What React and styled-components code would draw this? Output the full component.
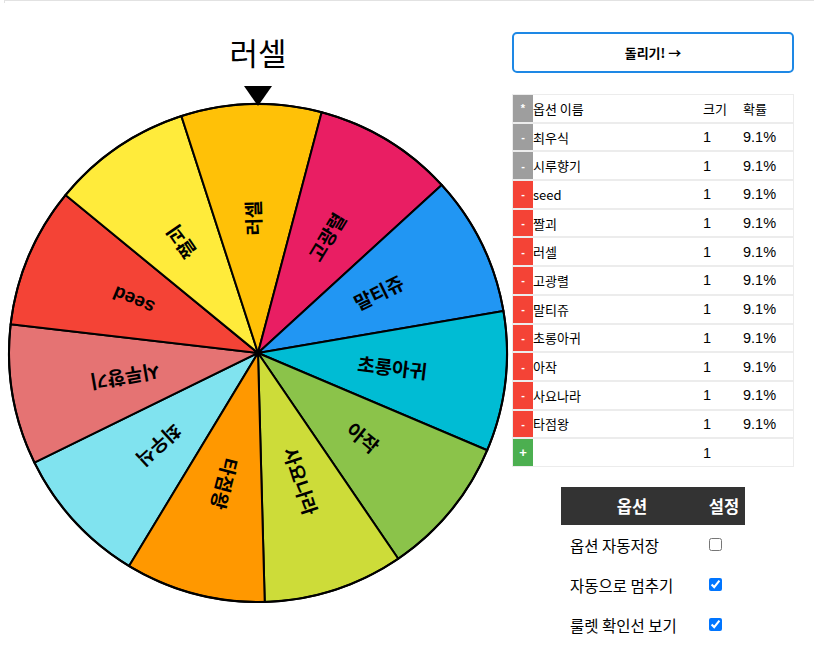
import React from "react";
import styled, { createGlobalStyle } from "styled-components";

const Global = createGlobalStyle`
  html, body { margin: 0; padding: 0; background: #fff; }
  body { font-family: "Liberation Sans", "Noto Sans CJK KR", sans-serif; color: #000; }
`;

const TopBar = styled.div`
  margin-left: 4px;
  height: 2px;
  border-top: 1px solid #e2e2e2;
  border-left: 1px solid #e2e2e2;
`;

const Main = styled.div`
  display: flex;
  align-items: flex-start;
`;

const LeftCol = styled.div`
  margin-left: 6px;
  width: 504px;
  display: flex;
  flex-direction: column;
  align-items: center;
`;

const Title = styled.div`
  margin-top: 26px;
  font-family: "Noto Sans CJK KR", sans-serif;
  font-size: 31px;
  line-height: 46px;
  font-weight: 400;
`;

const Pointer = styled.div`
  position: relative;
  z-index: 1;
  width: 0;
  height: 0;
  margin: 11px 0 -5px;
  border-left: 14px solid transparent;
  border-right: 14px solid transparent;
  border-top: 20px solid #000;
`;

const WheelSvg = styled.svg`
  display: block;
  width: 504px;
  height: 504px;
`;

const RightCol = styled.div`
  margin-left: 2px;
  width: 282px;
  padding-top: 29px;
  display: flex;
  flex-direction: column;
  align-items: center;
`;

const SpinButton = styled.button`
  width: 282px;
  height: 41px;
  border: 2px solid #1e88e5;
  border-radius: 5px;
  background: #fff;
  font-family: "Noto Sans CJK KR", sans-serif;
  font-weight: 700;
  font-size: 13px;
  color: #000;
  padding: 0;
`;

const Table = styled.div`
  margin-top: 21px;
  width: 282px;
  box-sizing: border-box;
  border: 1px solid #ececec;
  background: #ececec;
  display: flex;
  flex-direction: column;
  gap: 2px;
`;

const Row = styled.div`
  display: grid;
  grid-template-columns: 20px 1fr 40px 50px;
  height: 26.7px;
  align-items: center;
  background: #fff;
  font-family: "Noto Sans CJK KR", sans-serif;
  font-size: 13px;
`;

const RowBtn = styled.div`
  align-self: stretch;
  display: flex;
  align-items: center;
  justify-content: center;
  background: ${(p) => p.$bg};
  color: #fff;
  font-family: "Liberation Sans", sans-serif;
  font-weight: 700;
  font-size: ${(p) => (p.$big ? "13px" : "11px")};
`;

const NameCell = styled.div`
  white-space: nowrap;
`;

const NumCell = styled.div`
  font-family: ${(p) => (p.$kr ? '"Noto Sans CJK KR", sans-serif' : '"Liberation Sans", sans-serif')};
  font-size: ${(p) => (p.$kr ? "13px" : "14.5px")};
`;

const OptTable = styled.div`
  margin-top: 20px;
  width: 184px;
  display: flex;
  flex-direction: column;
`;

const OptHead = styled.div`
  display: grid;
  grid-template-columns: 142px 42px;
  height: 38px;
  align-items: center;
  background: #333;
  color: #fff;
  font-family: "Noto Sans CJK KR", sans-serif;
  font-weight: 700;
  font-size: 16.5px;
  text-align: center;
`;

const OptRow = styled.div`
  display: grid;
  grid-template-columns: 142px 42px;
  height: 40px;
  align-items: center;
  font-family: "Noto Sans CJK KR", sans-serif;
  font-size: 15.5px;
`;

const OptLabel = styled.div`
  padding-left: 9px;
  white-space: nowrap;
`;

const OptCheck = styled.div`
  display: flex;
  justify-content: flex-start;
  padding-left: 6px;
  input {
    margin: 0;
    width: 13px;
    height: 13px;
  }
`;

const items = [
  { name: "최우식", color: "#80E3EF", btn: "#9e9e9e" },
  { name: "시루향기", color: "#E57373", btn: "#9e9e9e" },
  { name: "seed", color: "#F44336", btn: "#f44336" },
  { name: "짤괴", color: "#FFEB3B", btn: "#f44336" },
  { name: "러셀", color: "#FFC107", btn: "#f44336" },
  { name: "고광렬", color: "#E91E63", btn: "#f44336" },
  { name: "말티쥬", color: "#2196F3", btn: "#f44336" },
  { name: "초롱아귀", color: "#00BCD4", btn: "#f44336" },
  { name: "아작", color: "#8BC34A", btn: "#f44336" },
  { name: "사요나라", color: "#CDDC39", btn: "#f44336" },
  { name: "타점왕", color: "#FF9800", btn: "#f44336" },
];

const C = 252;
const R = 249;
const STEP = 360 / items.length;
const OFFSET = -1.55;

function pt(angDeg, r) {
  const a = (angDeg * Math.PI) / 180;
  return [C + r * Math.cos(a), C + r * Math.sin(a)];
}

function Wheel() {
  return (
    <WheelSvg viewBox="0 0 504 504">
      {items.map((it, i) => {
        const mid = -90 + OFFSET + (i - 4) * STEP;
        const a0 = mid - STEP / 2;
        const a1 = mid + STEP / 2;
        const [x0, y0] = pt(a0, R);
        const [x1, y1] = pt(a1, R);
        const d = `M ${C} ${C} L ${x0} ${y0} A ${R} ${R} 0 0 1 ${x1} ${y1} Z`;
        return (
          <path key={it.name} d={d} fill={it.color} stroke="#000" strokeWidth="2" strokeLinejoin="round" />
        );
      })}
      <circle cx={C} cy={C} r={R} fill="none" stroke="#000" strokeWidth="2" />
      {items.map((it, i) => {
        const mid = -90 + OFFSET + (i - 4) * STEP;
        return (
          <text
            key={"t" + it.name}
            transform={`translate(${C} ${C}) rotate(${mid}) translate(135 0)`}
            textAnchor="middle"
            dominantBaseline="central"
            fontFamily='"Liberation Sans", "Noto Sans CJK KR", sans-serif'
            fontWeight="700"
            fontSize="19"
            fill="#000"
          >
            {it.name}
          </text>
        );
      })}
      <circle cx={C} cy={C} r={2.5} fill="#000" />
    </WheelSvg>
  );
}

export default function App() {
  return (
    <>
      <Global />
      <TopBar />
      <Main>
        <LeftCol>
          <Title>러셀</Title>
          <Pointer />
          <Wheel />
        </LeftCol>
        <RightCol>
          <SpinButton>돌리기! →</SpinButton>
          <Table>
            <Row>
              <RowBtn $bg="#9e9e9e">*</RowBtn>
              <NameCell>옵션 이름</NameCell>
              <NumCell $kr>크기</NumCell>
              <NumCell $kr>확률</NumCell>
            </Row>
            {items.map((it) => (
              <Row key={it.name}>
                <RowBtn $bg={it.btn}>-</RowBtn>
                <NameCell>{it.name}</NameCell>
                <NumCell>1</NumCell>
                <NumCell>9.1%</NumCell>
              </Row>
            ))}
            <Row>
              <RowBtn $bg="#4caf50" $big>+</RowBtn>
              <NameCell />
              <NumCell>1</NumCell>
              <NumCell />
            </Row>
          </Table>
          <OptTable>
            <OptHead>
              <div>옵션</div>
              <div>설정</div>
            </OptHead>
            <OptRow>
              <OptLabel>옵션 자동저장</OptLabel>
              <OptCheck><input type="checkbox" readOnly /></OptCheck>
            </OptRow>
            <OptRow>
              <OptLabel>자동으로 멈추기</OptLabel>
              <OptCheck><input type="checkbox" defaultChecked /></OptCheck>
            </OptRow>
            <OptRow>
              <OptLabel>룰렛 확인선 보기</OptLabel>
              <OptCheck><input type="checkbox" defaultChecked /></OptCheck>
            </OptRow>
          </OptTable>
        </RightCol>
      </Main>
    </>
  );
}
